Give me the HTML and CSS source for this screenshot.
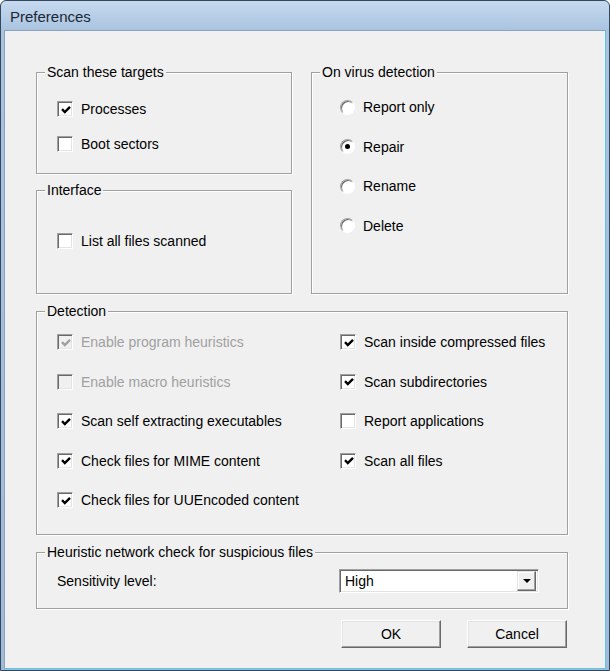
FILE: index.html
```html
<!DOCTYPE html>
<html lang="en">
<head>
    <meta charset="UTF-8">
    <title>Preferences</title>
    <link rel="stylesheet" href="styles.css">
</head>
<body>
    <div class="window">
        <div class="titlebar">Preferences</div>
        <div class="client">
            <div class="top">
                <div class="col">
                    <fieldset class="group g-targets">
                        <legend>Scan these targets</legend>
                        <label class="check"><span class="box"><svg viewBox="0 0 10 10"><polyline points="1,4.2 3.8,7 9,1.8"/></svg></span>Processes</label>
                        <label class="check"><span class="box"></span>Boot sectors</label>
                    </fieldset>
                    <fieldset class="group g-interface">
                        <legend>Interface</legend>
                        <label class="check"><span class="box"></span>List all files scanned</label>
                    </fieldset>
                </div>
                <fieldset class="group g-virus">
                    <legend>On virus detection</legend>
                    <label class="radio"><span class="dot"></span>Report only</label>
                    <label class="radio"><span class="dot on"></span>Repair</label>
                    <label class="radio"><span class="dot"></span>Rename</label>
                    <label class="radio"><span class="dot"></span>Delete</label>
                </fieldset>
            </div>

            <fieldset class="group g-detect">
                <legend>Detection</legend>
                <div class="detect-cols">
                    <div class="detect-col">
                        <label class="check disabled"><span class="box"><svg viewBox="0 0 10 10"><polyline points="1,4.2 3.8,7 9,1.8"/></svg></span>Enable program heuristics</label>
                        <label class="check disabled"><span class="box"></span>Enable macro heuristics</label>
                        <label class="check"><span class="box"><svg viewBox="0 0 10 10"><polyline points="1,4.2 3.8,7 9,1.8"/></svg></span>Scan self extracting executables</label>
                        <label class="check"><span class="box"><svg viewBox="0 0 10 10"><polyline points="1,4.2 3.8,7 9,1.8"/></svg></span>Check files for MIME content</label>
                        <label class="check"><span class="box"><svg viewBox="0 0 10 10"><polyline points="1,4.2 3.8,7 9,1.8"/></svg></span>Check files for UUEncoded content</label>
                    </div>
                    <div class="detect-col">
                        <label class="check"><span class="box"><svg viewBox="0 0 10 10"><polyline points="1,4.2 3.8,7 9,1.8"/></svg></span>Scan inside compressed files</label>
                        <label class="check"><span class="box"><svg viewBox="0 0 10 10"><polyline points="1,4.2 3.8,7 9,1.8"/></svg></span>Scan subdirectories</label>
                        <label class="check"><span class="box"></span>Report applications</label>
                        <label class="check"><span class="box"><svg viewBox="0 0 10 10"><polyline points="1,4.2 3.8,7 9,1.8"/></svg></span>Scan all files</label>
                    </div>
                </div>
            </fieldset>

            <fieldset class="group g-heur">
                <legend>Heuristic network check for suspicious files</legend>
                <div class="heur-row">
                    <span>Sensitivity level:</span>
                    <div class="select">
                        <span class="select-text">High</span>
                        <span class="select-btn"><svg viewBox="0 0 8 4"><polygon points="0,0 8,0 4,4"/></svg></span>
                    </div>
                </div>
            </fieldset>

            <div class="buttons">
                <button class="btn">OK</button>
                <button class="btn">Cancel</button>
            </div>
        </div>
    </div>
</body>
</html>
```

FILE: styles.css
```css
* {
    margin: 0;
    padding: 0;
    box-sizing: border-box;
}

body {
    background: #fff;
    font-family: "Liberation Sans", Arial, sans-serif;
    font-size: 14px;
    color: #000;
}

.window {
    display: flex;
    flex-direction: column;
    width: 610px;
    height: 671px;
    padding: 0 3px 1px;
    border: 1px solid #34475f;
    border-radius: 6px 6px 0 0;
    background: linear-gradient(#c6daef, #a9c3df 30px, #9fbbd9);
}

.titlebar {
    height: 29px;
    padding: 2px 0 0 6px;
    line-height: 28px;
    font-size: 15px;
    color: #1b2735;
}

.client {
    flex: 1;
    padding: 33px 37px 0 31px;
    border: 1px solid;
    border-color: #8aa2bd #5cc6e6 #5cc6e6 #8aa2bd;
    background: #f0f0f0;
}

.top {
    display: grid;
    grid-template-columns: 256px 257px;
    column-gap: 19px;
}

.col {
    display: flex;
    flex-direction: column;
    gap: 8px;
}

.group {
    display: flex;
    flex-direction: column;
    min-width: 0;
    border: 1px solid #a0a0a0;
    box-shadow: inset 1px 1px 0 #fff, 1px 1px 0 #fff;
}

.group legend {
    margin-left: -12px;
    padding: 0 2px;
    line-height: 16px;
    background: #f0f0f0;
}

.g-targets {
    height: 110px;
    padding: 19px 0 0 20px;
    gap: 15px;
}

.g-interface {
    height: 112px;
    padding: 33px 0 0 20px;
}

.g-virus {
    height: 230px;
    padding: 17px 0 0 28px;
    gap: 19.5px;
}

.g-virus legend {
    margin-left: -20px;
}

.g-detect {
    height: 232px;
    margin-top: 9px;
    padding: 13px 0 0 20px;
}

.g-heur {
    height: 65px;
    margin-top: 9px;
    padding: 9px 0 0 20px;
}

.detect-cols {
    display: grid;
    grid-template-columns: 283px 1fr;
}

.detect-col {
    display: flex;
    flex-direction: column;
    gap: 19.5px;
}

.check,
.radio {
    display: flex;
    align-items: center;
    height: 20px;
    white-space: nowrap;
}

.box {
    display: flex;
    align-items: center;
    justify-content: center;
    flex: none;
    width: 16px;
    height: 16px;
    margin-right: 8px;
    border: 1px solid;
    border-color: #a0a0a0 #fff #fff #a0a0a0;
    box-shadow: inset 1px 1px 0 #696969, inset -1px -1px 0 #e3e3e3;
    background: #fff;
}

.box svg {
    width: 10px;
    height: 10px;
    margin: 1px 0 0 1px;
}

.box polyline {
    fill: none;
    stroke: #000;
    stroke-width: 2.4;
}

.disabled {
    color: #a0a0a0;
}

.disabled .box {
    background: #f0f0f0;
}

.disabled .box polyline {
    stroke: #a0a0a0;
}

.dot {
    display: flex;
    align-items: center;
    justify-content: center;
    flex: none;
    width: 15px;
    height: 15px;
    margin-right: 8px;
    border: 1px solid;
    border-color: #a0a0a0 #fff #fff #a0a0a0;
    border-radius: 50%;
    box-shadow: inset 1px 1px 0 #696969;
    background: #fff;
}

.dot.on::after {
    content: "";
    width: 5px;
    height: 5px;
    border-radius: 50%;
    background: #000;
}

.heur-row {
    display: grid;
    grid-template-columns: 282px 200px;
    align-items: center;
}

.select {
    display: flex;
    align-items: center;
    height: 24px;
    padding: 2px;
    border: 1px solid;
    border-color: #a0a0a0 #fff #fff #a0a0a0;
    box-shadow: inset 1px 1px 0 #696969, inset -1px -1px 0 #e3e3e3;
    background: #fff;
}

.select-text {
    flex: 1;
    padding-left: 3px;
}

.select-btn {
    display: flex;
    align-items: center;
    justify-content: center;
    width: 19px;
    height: 20px;
    border: 1px solid;
    border-color: #e3e3e3 #696969 #696969 #e3e3e3;
    box-shadow: inset -1px -1px 0 #a0a0a0, inset 1px 1px 0 #fff;
    background: #f0f0f0;
}

.select-btn svg {
    width: 8px;
    height: 4px;
}

.buttons {
    display: flex;
    justify-content: flex-end;
    gap: 26px;
    margin: 11px 1px 0 0;
}

.btn {
    width: 100px;
    height: 28px;
    border: 1px solid;
    border-color: #fff #696969 #696969 #fff;
    box-shadow: inset -1px -1px 0 #a0a0a0, inset 1px 1px 0 #e3e3e3;
    background: #f0f0f0;
    font: inherit;
    color: #000;
}
```
